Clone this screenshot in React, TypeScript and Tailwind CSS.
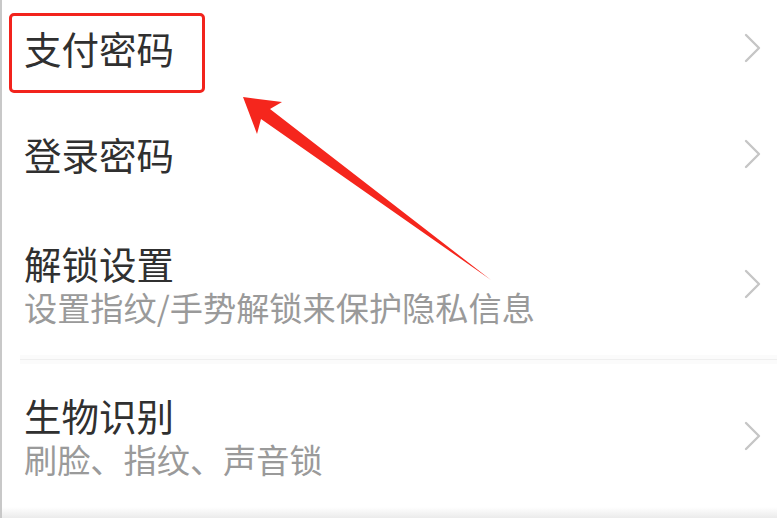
import React from 'react';

const cjk = { fontFamily: '"Noto Sans CJK SC", "Noto Sans", sans-serif' };

function Chevron() {
  return (
    <svg width="20" height="32" viewBox="0 0 20 32" className="shrink-0">
      <path d="M3 3 L16 16 L3 29" fill="none" stroke="#c6c6c6" strokeWidth="2.4" strokeLinecap="round" strokeLinejoin="round" />
    </svg>
  );
}

interface RowProps {
  title: string;
  sub?: string;
  height: string;
}

function Row({ title, sub, height }: RowProps) {
  return (
    <div className={`flex items-center justify-between pl-[22px] pr-[14px] ${height}`}>
      <div className="flex flex-col">
        <span className="text-[37.5px] leading-[38px] text-[#303030]">{title}</span>
        {sub && <span className="mt-[8px] text-[33.2px] leading-[34px] text-[#9a9a9a]">{sub}</span>}
      </div>
      <Chevron />
    </div>
  );
}

export default function App() {
  return (
    <div className="relative w-[777px] h-[518px] overflow-hidden bg-white border-l-2 border-[#c8c8c8]" style={cjk}>
      <Row title="支付密码" height="h-[95px]" />
      <Row title="登录密码" height="h-[117px]" />
      <Row title="解锁设置" sub="设置指纹/手势解锁来保护隐私信息" height="h-[143px]" />
      <div className="ml-[18px] h-[9px] bg-[#fbfbfb] flex items-center">
        <div className="h-px w-full bg-[#efefef]" />
      </div>
      <Row title="生物识别" sub="刷脸、指纹、声音锁" height="h-[143px]" />
      <div className="h-[11px] bg-gradient-to-b from-white to-[#ebebeb]" />

      {/* annotation */}
      <div className="absolute left-[7px] top-[13px] w-[196px] h-[80px] border-[3px] border-[#f2231c] rounded-[5px]" />
      <svg className="absolute left-0 top-0" width="777" height="518" viewBox="0 0 777 518">
        <polygon points="241,97 280,102 268,109 489,280 259,119 255,134" fill="#f5261d" />
      </svg>
    </div>
  );
}
